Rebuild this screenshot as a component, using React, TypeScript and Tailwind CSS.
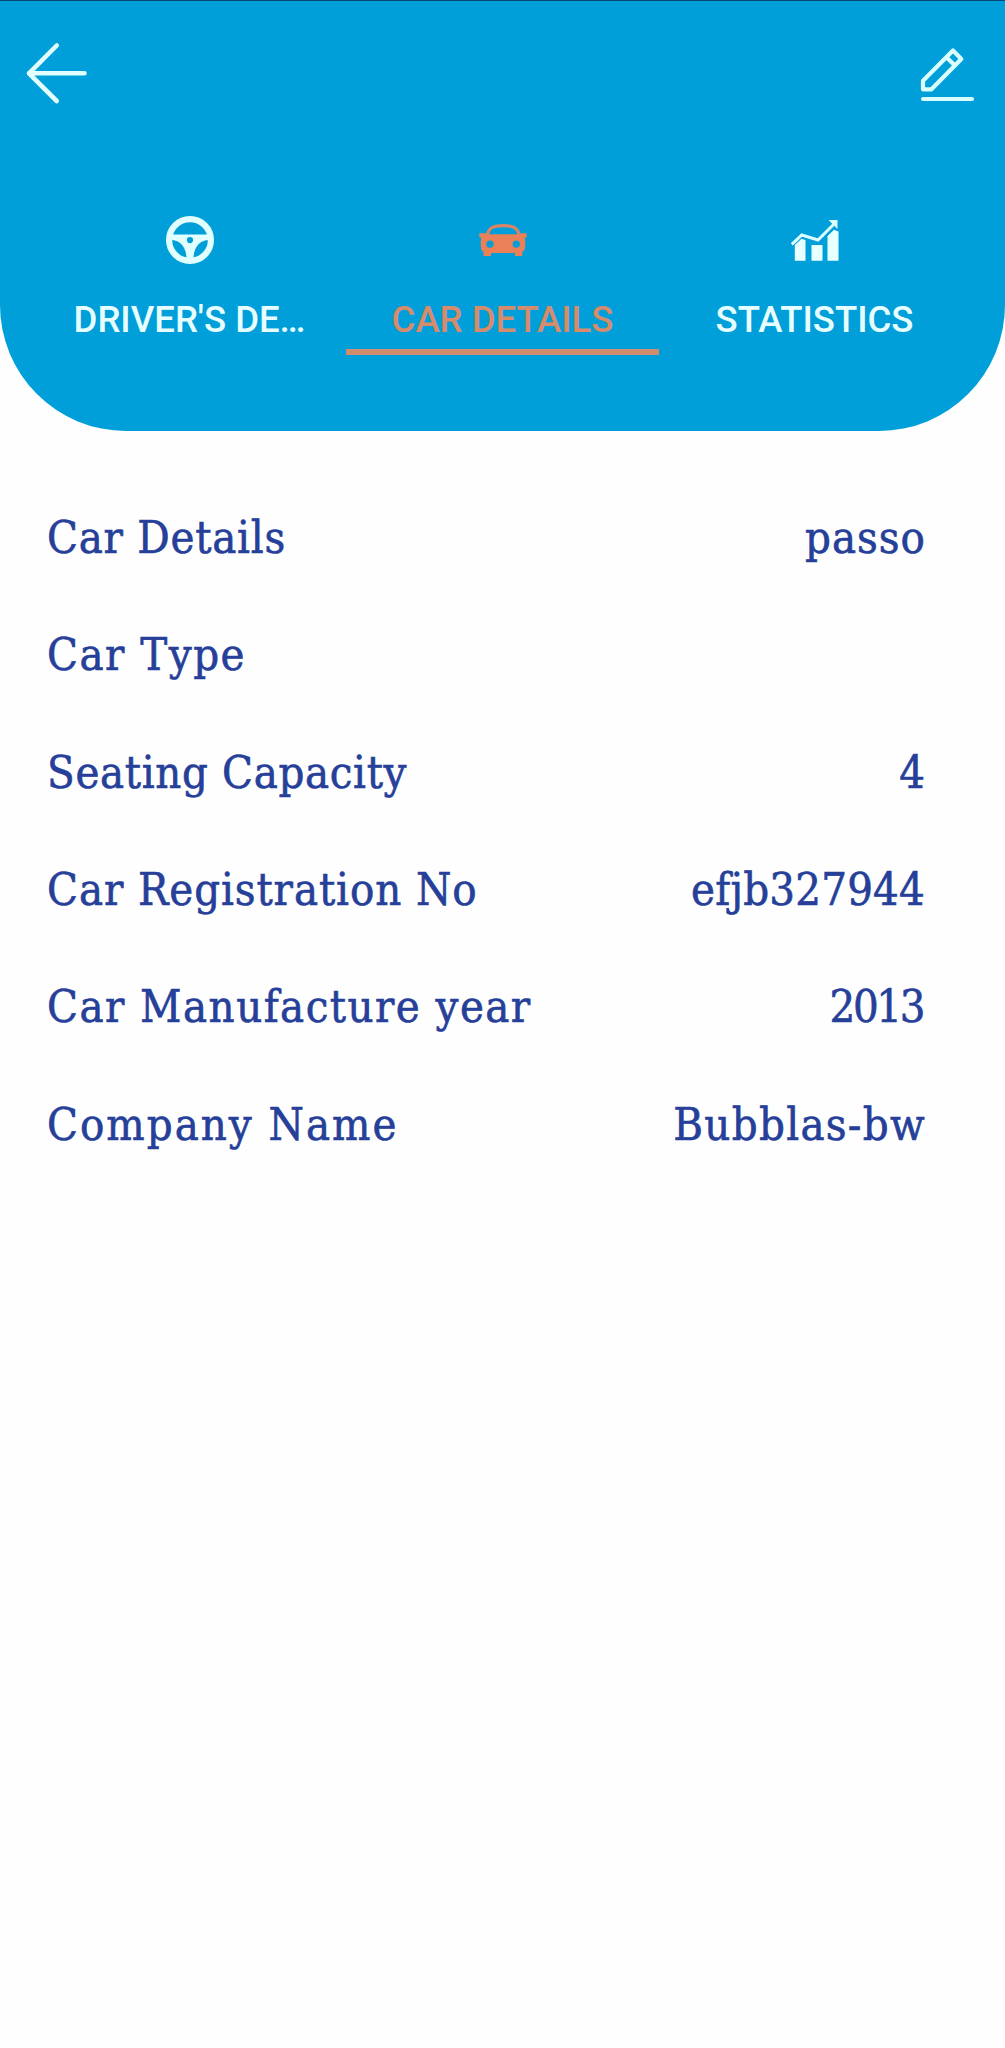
import React from 'react';
import clsx from 'clsx';

const rows = [
  { label: 'Car Details', value: 'passo', labelClass: 'tracking-[0.75px]', valueClass: 'tracking-[1px] -mr-[1px]' },
  { label: 'Car Type', value: '', labelClass: 'tracking-[1.5px]', valueClass: '' },
  { label: 'Seating Capacity', value: '4', labelClass: 'tracking-[0.65px]', valueClass: '' },
  { label: 'Car Registration No', value: 'efjb327944', labelClass: 'tracking-[0.9px]', valueClass: 'tracking-[0.2px]' },
  { label: 'Car Manufacture year', value: '2013', labelClass: 'tracking-[1.45px]', valueClass: 'tracking-[-2.4px] mr-[2px]' },
  { label: 'Company Name', value: 'Bubblas-bw', labelClass: 'tracking-[2px]', valueClass: 'tracking-[1.3px] -mr-[1px]' },
];

const BackIcon: React.FC = () => (
  <svg className="w-[64px] h-[64px]" viewBox="25 41 64 64" fill="none" stroke="#e2fefe" strokeWidth="4.6" strokeLinecap="round" strokeLinejoin="round">
    <path d="M56.7 45.5 29 73.3 56.7 101M29 73.3H84.5" />
  </svg>
);

const EditIcon: React.FC = () => (
  <svg className="w-[60px] h-[60px]" viewBox="38 44 60 60" fill="none" stroke="#dafdfe" strokeWidth="4.2" strokeLinejoin="round">
    <path d="M73 50.5 81.3 59 51.5 89.3H43V80.7ZM66.4 57.3 75.4 66" />
    <path d="M43 99H92" strokeLinecap="round" />
  </svg>
);

const WheelIcon: React.FC = () => (
  <svg className="w-[48px] h-[48px]" viewBox="0 0 48 48">
    <circle cx="24" cy="24" r="20.9" fill="none" stroke="#e2ffff" strokeWidth="6.2" />
    <path
      fill="#e2ffff"
      fillRule="evenodd"
      d="M5 18.5H43V24C34.5 24 27.5 30.5 27.5 43H20.5C20.5 30.5 13.5 24 5 24ZM24 21A3.1 3.1 0 1 0 24 27.2 3.1 3.1 0 1 0 24 21Z"
    />
  </svg>
);

const CarIcon: React.FC = () => (
  <svg className="w-[48px] h-[48px]" viewBox="0 0 48 48">
    <path d="M8.2 19C10 12 14 9.6 24.2 9.6S38.5 12 40.2 19" fill="none" stroke="#d88565" strokeWidth="3.2" />
    <path
      fill="#ea8057"
      fillRule="evenodd"
      d="M.3 17.3H5.5L8.5 18.3H39.5L42.5 17.3H47.7V21L45.7 22Q47 28 45.5 34L43.3 36V40H36V37H12V40H4.5V36L2.5 34Q1 28 2.3 22L.3 21ZM11 24.6A3.6 3.6 0 1 0 11 31.8 3.6 3.6 0 1 0 11 24.6ZM37.3 24.6A3.6 3.6 0 1 0 37.3 31.8 3.6 3.6 0 1 0 37.3 24.6Z"
    />
  </svg>
);

const StatsIcon: React.FC = () => (
  <svg className="w-[48px] h-[48px]" viewBox="791.5 216 48 48">
    <path fill="#e8ffff" d="M795.3 245 802 238.7 806 240V260.7H795.3ZM812 245H823V260.7H812ZM828 236 834.5 229.7 839 231.5V260.7H828Z" />
    <path d="M792.3 244.3 802.3 235 818.5 240 834 224.5" fill="none" stroke="#dcfeff" strokeWidth="3" />
    <path fill="#dcfeff" d="M829 220H838V229Z" />
  </svg>
);

const tabs = [
  { name: "DRIVER'S DE…", icon: WheelIcon, active: false, className: '' },
  { name: 'CAR DETAILS', icon: CarIcon, active: true, className: '' },
  { name: 'STATISTICS', icon: StatsIcon, active: false, className: 'pr-[2px]' },
];

const App: React.FC = () => {
  return (
    <div className="w-full h-[2048px] bg-[#fefefe] overflow-hidden">
      {/* Header */}
      <header className="h-[431px] bg-[#009fda] border-t border-[#0b4673] rounded-b-[126px]">
        <div className="flex justify-between items-start pl-[25px] pr-[27px] pt-10 h-[215px]">
          <button aria-label="Back">
            <BackIcon />
          </button>
          <button aria-label="Edit" className="pt-[3px]">
            <EditIcon />
          </button>
        </div>

        {/* Tabs */}
        <nav className="grid grid-cols-3 px-[33px]">
          {tabs.map(({ name, icon: Icon, active, className }) => (
            <div
              key={name}
              className={clsx(
                'flex flex-col items-center h-[139px] border-b-[6px]',
                active ? 'border-[#d18b6d] text-[#d68b6b]' : 'border-transparent text-[#e6feff]',
                className
              )}
            >
              <Icon />
              <span className="mt-8 font-['Roboto'] font-medium text-[36.5px] leading-[48px] whitespace-nowrap">
                {name}
              </span>
            </div>
          ))}
        </nav>
      </header>

      {/* Car info */}
      <main className="pt-[48.5px] pl-[47px] pr-[80px]">
        {rows.map((row) => (
          <div
            key={row.label}
            className="flex items-center justify-between h-[117.3px] font-['DejaVu_Serif_Condensed','DejaVu_Serif',serif] [font-stretch:condensed] text-[45px] leading-[60px] text-[#263f99] [-webkit-text-stroke:0.6px_#263f99] whitespace-nowrap"
          >
            <span className={row.labelClass}>{row.label}</span>
            <span className={row.valueClass}>{row.value}</span>
          </div>
        ))}
      </main>
    </div>
  );
};

export default App;
